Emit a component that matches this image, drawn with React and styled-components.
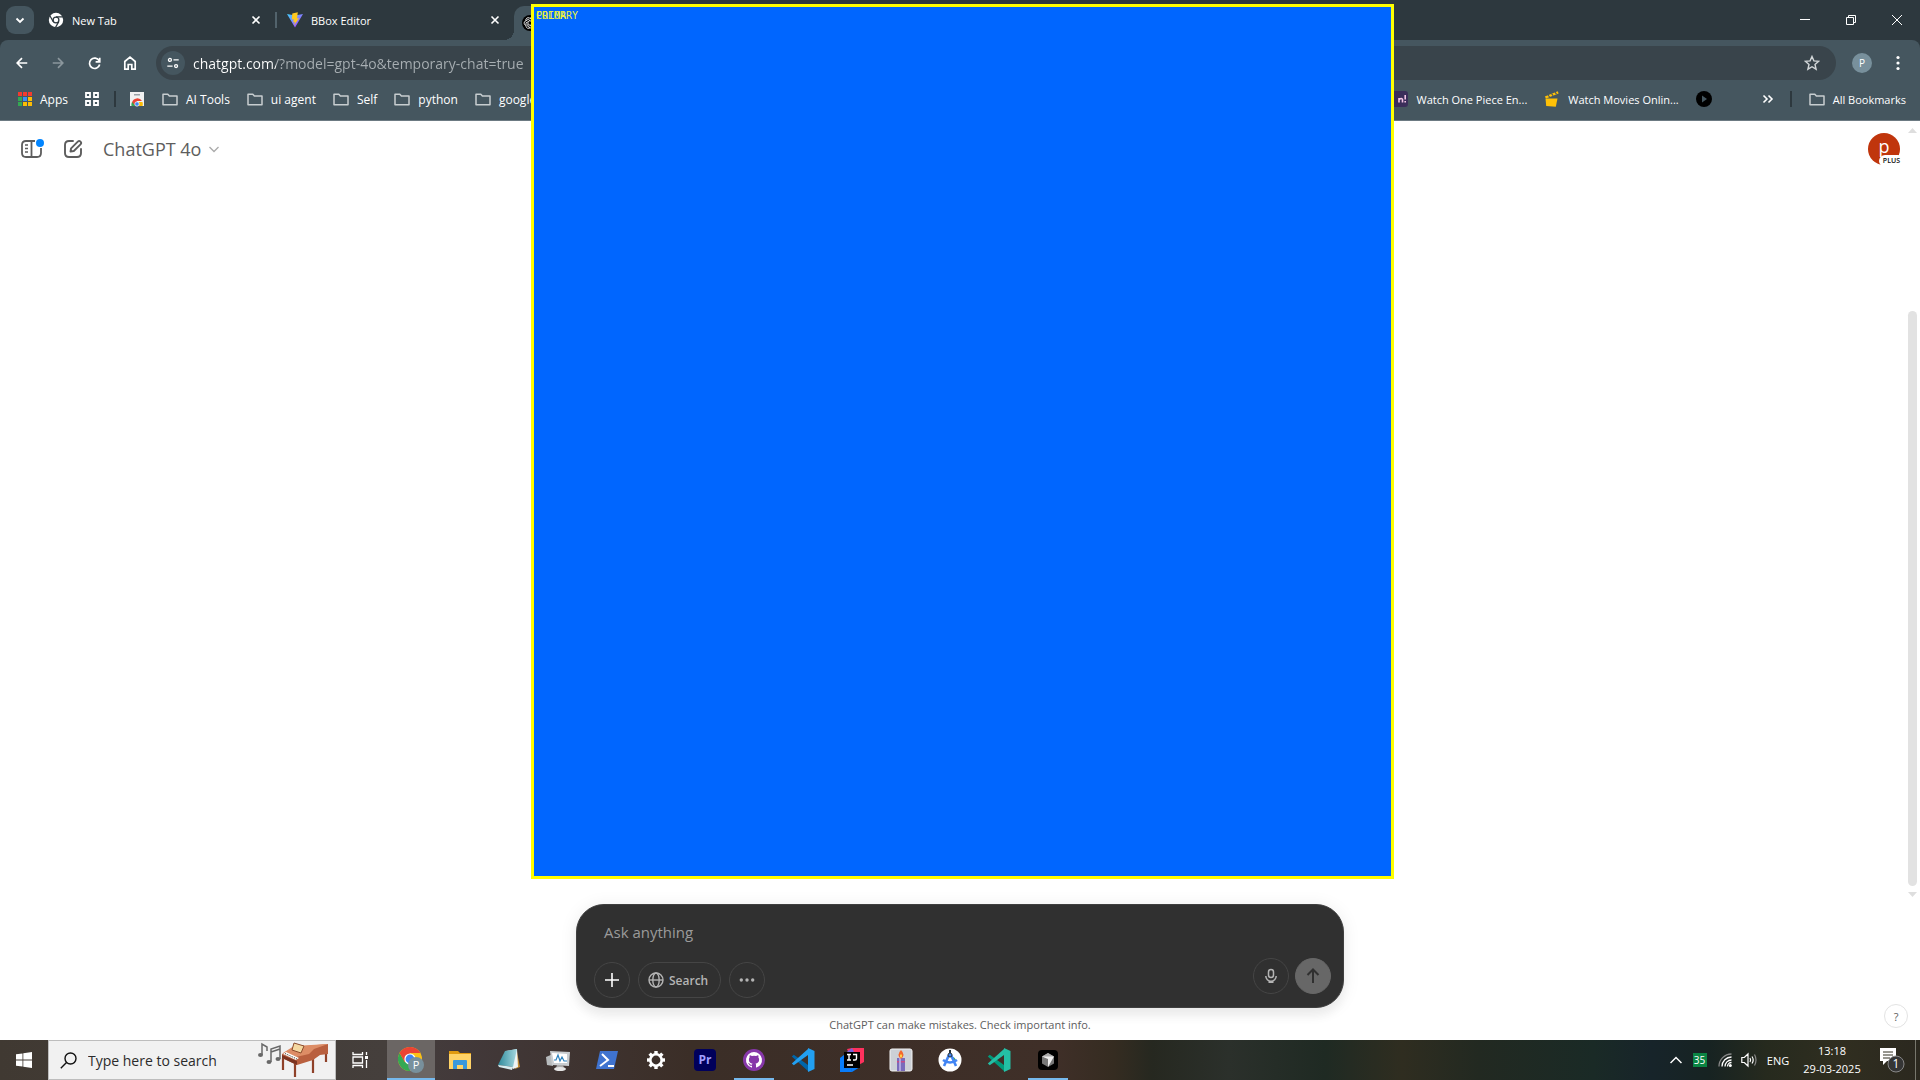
import React from "react";
import styled, { createGlobalStyle } from "styled-components";

const GlobalStyle = createGlobalStyle`
  * { box-sizing: border-box; }
  body { margin: 0; background: #fff; overflow: hidden; }
  body, button, input, textarea { font-family: "Open Sans", "Noto Sans", sans-serif; }
  button { padding: 0; border: 0; background: none; color: inherit; cursor: pointer; }
  a { color: inherit; text-decoration: none; }
  svg { display: block; flex: none; }
`;

const Desktop = styled.div`
  position: relative;
  display: flex;
  flex-direction: column;
  height: 100vh;
`;

/* ---------- browser chrome ---------- */
const TabStrip = styled.div`
  display: flex;
  align-items: center;
  height: 40px;
  background: #2d383e;
  color: #fff;
`;
const TabSearch = styled.button`
  display: grid;
  place-items: center;
  width: 28px;
  height: 28px;
  margin: 0 4px 0 6px;
  border-radius: 9px;
  background: #45565f;
`;
const Tab = styled.div`
  display: flex;
  align-items: center;
  gap: 8px;
  width: 237px;
  padding: 0 14px 0 10px;
  font-size: 11px;
`;
const TabTitle = styled.span`flex: 1;`;
const TabDivider = styled.span`
  width: 2px;
  height: 16px;
  background: #52636c;
`;
const ActiveTab = styled.div`
  position: relative;
  align-self: flex-end;
  display: flex;
  align-items: center;
  width: 238px;
  height: 34px;
  padding-left: 8px;
  border-radius: 10px 10px 0 0;
  background: #45565f;
  &::before {
    content: "";
    position: absolute;
    left: -10px;
    bottom: 0;
    width: 10px;
    height: 10px;
    background: radial-gradient(circle at 0 0, transparent 10px, #45565f 10px);
  }
`;
const WindowButtons = styled.div`
  display: flex;
  align-self: stretch;
  margin-left: auto;
`;
const WindowButton = styled.button`
  display: grid;
  place-items: center;
  width: 46px;
`;
const ToolbarBack = styled.div`background: #2d383e;`;
const Toolbar = styled.div`
  display: flex;
  align-items: center;
  height: 46px;
  padding: 0 4px;
  border-radius: 8px 8px 0 0;
  background: #45565f;
  color: #fff;
`;
const ToolButton = styled.button`
  display: grid;
  place-items: center;
  width: 36px;
  height: 34px;
  color: ${(p) => (p.$dim ? "#8b979d" : "#fff")};
`;
const Omnibox = styled.form`
  flex: 1;
  display: flex;
  align-items: center;
  height: 34px;
  margin: 0 8px;
  padding: 0 16px 0 5px;
  border-radius: 17px;
  background: #39444b;
`;
const SiteInfo = styled.button`
  display: grid;
  place-items: center;
  width: 24px;
  height: 24px;
  margin-right: 8px;
  border-radius: 50%;
  background: #45565f;
`;
const Address = styled.input`
  flex: 1;
  min-width: 0;
  padding: 0;
  border: 0;
  outline: 0;
  font-size: 14px;
  color: transparent;
  background: linear-gradient(90deg, #fff 83px, #a8afb3 83px);
  background-clip: text;
`;
const ProfileButton = styled.button`
  width: 20px;
  height: 20px;
  margin: 0 8px;
  border-radius: 50%;
  background: #78909c;
  color: #fff;
  font-size: 10px;
  line-height: 20px;
`;
const BookmarkBar = styled.nav`
  display: flex;
  align-items: center;
  height: 35px;
  padding: 0 14px 8px 18px;
  border-bottom: 1px solid #6c7a82;
  background: #45565f;
  color: #fff;
  white-space: nowrap;
`;
const BookmarkGroup = styled.div`
  display: flex;
  align-items: center;
  font-size: ${(p) => (p.$compact ? 11 : 12)}px;
`;
const Bookmark = styled.a`
  display: flex;
  align-items: center;
  gap: 8px;
  margin-right: ${(p) => p.$gap ?? 17}px;
`;
const BookmarkDivider = styled.span`
  width: 2px;
  height: 16px;
  margin-right: ${(p) => p.$gap}px;
  background: #2d383e;
`;
const Spacer = styled.span`flex: 1;`;

/* ---------- page ---------- */
const Page = styled.main`
  flex: 1;
  display: flex;
  flex-direction: column;
  min-height: 0;
  background: #fff;
`;
const ScrollArea = styled.div`
  flex: 1;
  display: flex;
  align-items: flex-start;
`;
const PageHeader = styled.header`
  flex: 1;
  display: flex;
  align-items: center;
  gap: 18px;
  height: 56px;
  padding: 0 5px 0 21px;
  color: #5d5d5d;
`;
const IconButton = styled.button`
  display: grid;
  place-items: center;
  height: 24px;
`;
const MoreBookmarks = styled(IconButton)`margin-right: 16px;`;
const ModelButton = styled.button`
  display: flex;
  align-items: center;
  gap: 8px;
  padding: 0 2px;
  font-size: 18px;
  font-weight: 500;
`;
const Account = styled.button`
  position: relative;
  width: 32px;
  height: 32px;
  margin-left: auto;
  border-radius: 50%;
  background: #c0350c;
  color: #fff;
  font-size: 18px;
  line-height: 24px;
`;
const AccountInitial = styled.span`
  display: block;
  height: 30px;
`;
const PlusBadge = styled.span`
  position: absolute;
  right: -4px;
  bottom: -2px;
  padding: 0 4px;
  border-radius: 6px;
  background: #fff;
  color: #0d0d0d;
  font-size: 7px;
  font-weight: 600;
  line-height: 12px;
`;
const ScrollRail = styled.div`
  align-self: stretch;
  display: flex;
  flex-direction: column;
  align-items: center;
  width: 15px;
  padding: 7px 0 3px;
`;
const ScrollTrack = styled.div`
  flex: 1;
  display: flex;
  flex-direction: column;
  justify-content: flex-end;
  padding: 6px 0;
`;
const ScrollThumb = styled.div`
  width: 9px;
  height: 77%;
  border-radius: 5px;
  background: #e2e2e2;
`;
const Footer = styled.footer`
  display: flex;
  justify-content: space-between;
  align-items: flex-end;
  padding: 4px 12px 0;
  &::before { content: ""; width: 24px; }
`;
const ComposerColumn = styled.div`
  width: 768px;
  text-align: center;
`;
const Composer = styled.form`
  display: flex;
  flex-direction: column;
  justify-content: space-between;
  height: 104px;
  padding: 15px 12px 9px 17px;
  border: 1px solid #3f3f3f;
  border-radius: 28px;
  background: #303030;
  box-shadow: 0 9px 9px rgba(0, 0, 0, 0.04), 0 2px 18px rgba(0, 0, 0, 0.08);
`;
const Prompt = styled.textarea`
  height: 24px;
  padding: 0 10px;
  border: 0;
  outline: 0;
  resize: none;
  background: transparent;
  color: #fff;
  font-size: 15px;
  line-height: 24px;
  overflow: hidden;
  &::placeholder { color: #9b9b9b; opacity: 1; }
`;
const Actions = styled.div`
  display: flex;
  gap: 8px;
`;
const RightActions = styled.div`
  display: flex;
  gap: 6px;
  margin: -4px 0 4px auto;
`;
const RoundButton = styled.button`
  display: flex;
  align-items: center;
  justify-content: center;
  gap: 5px;
  min-width: 36px;
  height: 36px;
  padding: ${(p) => (p.$wide ? "0 12px 0 9px" : "0")};
  border: 1px solid ${(p) => (p.$solid ? "#676767" : "#454545")};
  border-radius: 18px;
  background: ${(p) => (p.$solid ? "#676767" : "transparent")};
  color: ${(p) => p.$color ?? "#b4b4b4"};
  font-size: 12px;
  font-weight: 600;
`;
const Notice = styled.p`
  margin: 0;
  padding-top: 2px;
  color: #5d5d5d;
  font-size: 11px;
  line-height: 30px;
`;
const Help = styled.button`
  width: 24px;
  height: 24px;
  margin-bottom: 12px;
  border: 1px solid #e3e3e3;
  border-radius: 50%;
  color: #5d5d5d;
  font-size: 11px;
`;

/* ---------- bounding box laid over the screen ---------- */
const Region = styled.section`
  position: absolute;
  z-index: 2;
  left: 531px;
  top: 4px;
  width: 863px;
  height: 875px;
  border: 3px solid #ff0;
  background: #06f;
`;
const RegionLabel = styled.span`
  position: absolute;
  left: 2px;
  top: 3px;
  color: #e8f03c;
  font-family: "DejaVu Sans Mono", monospace;
  font-size: 10px;
  line-height: 12px;
`;

/* ---------- task bar ---------- */
const Taskbar = styled.div`
  display: flex;
  height: 40px;
  color: #fff;
  background: linear-gradient(90deg, #403932 0, #453f3c 20%, #42393a 24%, #3b2e27 36%, #3f2f28 55%,
    #352c21 58%, #262820 60%, #2b302b 64%, #1f2a23 69%, #2f2d20 73%, #222921 77%,
    #1a2a26 83%, #17242a 86%, #172322 89%, #262a1e 92%, #302e20 96%, #2b281f 100%);
`;
const StartButton = styled.button`
  display: grid;
  place-items: center;
  width: 48px;
`;
const TaskSearch = styled.form`
  display: flex;
  align-items: center;
  gap: 11px;
  width: 288px;
  padding: 0 6px 0 11px;
  border: 1px solid #bdbdbd;
  background: #f1f1f1;
  color: #111;
`;
const TaskInput = styled.input`
  flex: 1;
  min-width: 0;
  padding: 0;
  border: 0;
  outline: 0;
  background: transparent;
  font-size: 14px;
  &::placeholder { color: #2b2b2b; opacity: 1; }
`;
const TaskButton = styled.button`
  display: flex;
  flex-direction: column;
  align-items: center;
  justify-content: center;
  width: 48px;
  margin-right: 1px;
  background: ${(p) => (p.$active ? "#6b6664" : "transparent")};
  border-top: 2px solid transparent;
  border-bottom: 2px solid transparent;
  ${(p) => p.$active && "border-bottom-color: #76b9ed;"}
  ${(p) => p.$running && "border-bottom-color: #76b9ed; width: 40px; margin: 0 5px 0 4px;"}
`;
const RunningApps = styled.div`
  display: flex;
  margin-left: 2px;
`;
const Tray = styled.div`
  display: flex;
  align-items: center;
  margin-left: auto;
  font-size: 11px;
`;
const TrayButton = styled.button`
  display: grid;
  place-items: center;
  width: ${(p) => p.$width}px;
  height: 40px;
  font-size: 11px;
`;
const Temperature = styled.span`
  width: 14px;
  height: 14px;
  background: #0b8443;
  font-size: 10px;
  line-height: 14px;
`;
const Clock = styled.time`
  width: 72px;
  text-align: center;
  line-height: 18px;
`;
const ShowDesktop = styled.button`
  width: 5px;
  height: 40px;
  border-left: 1px solid #77766c;
`;

/* ---------- drawings ---------- */
const Line = ({ size = 16, box = 16, width = 1.5, children, ...rest }) => (
  <svg width={size} height={size} viewBox={`0 0 ${box} ${box}`} fill="none" stroke="currentColor" strokeWidth={width} aria-hidden="true" {...rest}>
    {children}
  </svg>
);
const CloseIcon = () => <Line size={10} box={10} width={1.6}><path d="M1.5 1.5l7 7M8.5 1.5l-7 7" /></Line>;
const FolderIcon = () => (
  <Line stroke="#c7cdd0"><path d="M1 3.2h4.8l1.6 1.9H15v8.7H1z" strokeLinejoin="round" /></Line>
);
const ChromeMono = () => (
  <svg width="16" height="16" viewBox="0 0 16 16" aria-hidden="true">
    <circle cx="8" cy="8" r="7.2" fill="#fff" />
    <circle cx="8" cy="8" r="2.9" fill="#fff" stroke="#2d383e" strokeWidth="1.3" />
    <path d="M8 4.8h7M5.2 9.6L1.9 3.8M10.8 9.6l-3.4 6" stroke="#2d383e" strokeWidth="1.2" />
  </svg>
);
const ViteIcon = () => (
  <svg width="16" height="16" viewBox="0 0 16 16" aria-hidden="true">
    <defs><linearGradient id="vite" x2="1" y2="1"><stop stopColor="#41d1ff" /><stop offset="1" stopColor="#bd34fe" /></linearGradient></defs>
    <path d="M0 2l8 13.500L16 2l-8 1.500z" fill="url(#vite)" />
    <path d="M10.800.3L5.300 1.400l-.5 6.200 2-.4-.6 3 1.700-.5-.9 3.600L12.200 6l-2.200.4z" fill="#ffc91f" />
  </svg>
);
const KnotIcon = () => (
  <svg width="16" height="16" viewBox="0 0 16 16" aria-hidden="true">
    <circle cx="8" cy="8" r="8" fill="#000" />
    {[0, 60, 120, 180, 240, 300].map((a) => (
      <path key={a} d="M8 3.200a2.400 2.400 0 014 1.600v3.400L8.400 10" transform={`rotate(${a} 8 8)`} fill="none" stroke="#fff" strokeWidth=".8" />
    ))}
  </svg>
);
const AppsIcon = () => (
  <svg width="14" height="14" viewBox="0 0 14 14" aria-hidden="true">
    {["#f33b2f", "#f33b2f", "#f33b2f", "#34a853", "#3b91f5", "#fbbc05", "#34a853", "#fbbc05", "#fbbc05"].map((c, i) => (
      <rect key={i} x={(i % 3) * 5} y={Math.floor(i / 3) * 5} width="4" height="4" fill={c} />
    ))}
  </svg>
);
const StoreIcon = () => (
  <svg width="16" height="16" viewBox="0 0 16 16" aria-hidden="true">
    <path d="M1 1h14v14H1z" fill="#f1f1f1" /><path d="M5 3h6v1.500H5z" fill="#9aa0a6" />
    <path d="M3 15V11.500a5.500 5.500 0 0110-1.500H8l-1 5z" fill="#ea4335" /><path d="M2.500 15a6 6 0 01.5-4l3.500 4z" fill="#34a853" />
    <path d="M9.500 11h4q.8 2 0 4H9z" fill="#fbbc05" /><circle cx="8" cy="13" r="2.200" fill="#4285f4" stroke="#fff" strokeWidth=".7" />
  </svg>
);
const AnimeIcon = () => (
  <svg width="16" height="16" viewBox="0 0 16 16" aria-hidden="true">
    <rect width="16" height="16" rx="3" fill="#3b2e5a" />
    <path d="M7 7v4.500M7 8.500q3-2 3.500 0v3M13.200 4v4.500M13.200 10v1.500" stroke="#f4c5e6" strokeWidth="1.600" fill="none" />
  </svg>
);
const ClapIcon = () => (
  <svg width="16" height="16" viewBox="0 0 16 16" aria-hidden="true">
    <path d="M1.500 7.500h12l-1.700 8.200-9.600-.6z" fill="#ffc107" /><path d="M.8 5.500L13.800.3l.8 2.200L2 7.400z" fill="#ffc107" />
    <path d="M4 4l1.600 2M7.500 2.600l1.600 2M11 1.200l1.500 2" stroke="#45565f" strokeWidth="1.100" />
  </svg>
);
const PlayIcon = () => (
  <svg width="16" height="16" viewBox="0 0 16 16" aria-hidden="true">
    <circle cx="8" cy="8" r="8" fill="#000" /><path d="M6 4.500L11 8l-5 3.500z" fill="#45565f" />
  </svg>
);
const Arrow = ({ down }) => (
  <svg width="9" height="5" viewBox="0 0 9 5" aria-hidden="true"><path d={down ? "M0 0h9L4.500 5z" : "M0 5h9L4.500 0z"} fill="#dedede" /></svg>
);
const PianoIcon = () => (
  <svg width="72" height="36" viewBox="0 0 72 36" aria-hidden="true">
    <path d="M5 13V2l5 3v4M14 20V7l9-3v13M14 10l9-3" fill="none" stroke="#686868" strokeWidth="1.500" />
    <ellipse cx="3.500" cy="13" rx="2.500" ry="2" fill="#686868" /><ellipse cx="12" cy="20" rx="2.500" ry="2" fill="#686868" /><ellipse cx="21" cy="17" rx="2.500" ry="2" fill="#686868" />
    <path d="M26 16v12M38 21v14M56 15v16M69 6v14" stroke="#8f4129" strokeWidth="2.200" />
    <path d="M25 12L37 5l34-3v10l-8 1-7 5-16 5-15-7z" fill="#b9603f" />
    <path d="M37 4l34-2-14 5-5 5-13 3-13-4z" fill="#dd8d66" />
    <path d="M25 13l15 6v4l-15-7z" fill="#7c3421" />
    <path d="M26 12l13 6 3-2-13-6z" fill="#fff" /><path d="M28 11.500l12 5.500" stroke="#332" strokeDasharray="1 1" />
    <path d="M37 1l10 3-3 7-9-3z" fill="#f4d8a1" stroke="#8b4b2c" />
  </svg>
);
const ChromeIcon = () => (
  <svg width="26" height="26" viewBox="0 0 26 26" aria-hidden="true">
    <circle cx="12" cy="12" r="12" fill="#fbc116" />
    <path d="M1.600 6A12 12 0 0012 24l5.200-9L12 12 6.800 15z" fill="#34a853" />
    <path d="M1.600 6A12 12 0 0122.400 6H12L6.800 15z" fill="#ea4335" />
    <circle cx="12" cy="12" r="5.600" fill="#fff" /><circle cx="12" cy="12" r="4.400" fill="#4285f4" />
    <circle cx="18" cy="18" r="8" fill="#78909c" />
    <text x="18" y="22" textAnchor="middle" fontSize="11" fill="#fff">P</text>
  </svg>
);
const ExplorerIcon = () => (
  <svg width="24" height="24" viewBox="0 0 24 24" aria-hidden="true">
    <path d="M1 3h9l2 2h11v3H1z" fill="#e19b10" /><path d="M1 6h22v15H1z" fill="#ffd367" />
    <path d="M5 21v-8q0-1 1-1h12q1 0 1 1v8h-4v-4H9v4z" fill="#3b99dc" />
  </svg>
);
const NotepadIcon = () => (
  <svg width="24" height="24" viewBox="0 0 24 24" aria-hidden="true">
    <defs><linearGradient id="pad" x2="1"><stop stopColor="#2f8a9b" /><stop offset="1" stopColor="#a5d8e0" /></linearGradient></defs>
    <path d="M20 4l3 15-5 2z" fill="#c28b33" /><path d="M9 3l11-2 1 18-5 2z" fill="#eef4f5" /><path d="M8 3l12-2-4 18-15-2z" fill="url(#pad)" /><path d="M1 17l15 2-1 3-13-3z" fill="#d8ecef" />
  </svg>
);
const MonitorIcon = () => (
  <svg width="24" height="24" viewBox="0 0 24 24" aria-hidden="true">
    <path d="M0 9l7-3v12l-6-1z" fill="#b7bbbd" /><path d="M4 3l20 1-1 14-17-1z" fill="#c9cdd0" /><path d="M6 5l15 1v9L8 15z" fill="#fff" />
    <path d="M8 12h2l2-5 2 6 2-4 2 4h3" fill="none" stroke="#2a80bd" strokeWidth="1.200" /><path d="M11 17h6l1 3H10z" fill="#aaa" /><ellipse cx="14" cy="21" rx="6" ry="2" fill="#e5e5e5" />
  </svg>
);
const PowerShellIcon = () => (
  <svg width="24" height="24" viewBox="0 0 24 24" aria-hidden="true">
    <path d="M5 3h18l-4 18H1z" fill="#3f73cf" /><path d="M7 6l6 6-8 6M13 18h6" fill="none" stroke="#fff" strokeWidth="2" />
  </svg>
);
const GearIcon = () => (
  <svg width="20" height="20" viewBox="0 0 20 20" aria-hidden="true">
    <circle cx="10" cy="10" r="5.700" fill="none" stroke="#fff" strokeWidth="2.600" />
    {[0, 45, 90, 135, 180, 225, 270, 315].map((a) => <rect key={a} x="8.300" y="1" width="3.400" height="3" fill="#fff" transform={`rotate(${a} 10 10)`} />)}
  </svg>
);
const PremiereIcon = () => (
  <svg width="22" height="22" viewBox="0 0 22 22" aria-hidden="true">
    <rect width="22" height="22" rx="4" fill="#00005b" /><text x="11" y="15" textAnchor="middle" fontSize="12" fontWeight="700" fill="#9f9fff">Pr</text>
  </svg>
);
const GithubIcon = () => (
  <svg width="22" height="22" viewBox="0 0 22 22" aria-hidden="true">
    <circle cx="11" cy="11" r="11" fill="#8637a9" />
    <path d="M11 3a8 8 0 00-2.500 15.600c.4.100.5-.2.500-.4v-1.500c-2.200.5-2.700-1-2.700-1-.4-.9-.9-1.200-.9-1.200-.7-.5.100-.5.100-.5.800.1 1.200.8 1.200.8.700 1.300 1.900.9 2.300.7.100-.5.300-.9.500-1.100-1.800-.2-3.600-.9-3.600-4 0-.9.300-1.600.8-2.100-.1-.2-.4-1 .1-2.100 0 0 .7-.2 2.200.8a7.600 7.600 0 014 0c1.500-1 2.200-.8 2.200-.8.500 1.100.2 1.900.1 2.100.5.500.8 1.200.8 2.100 0 3.100-1.900 3.800-3.600 4 .3.300.5.700.5 1.500v2.300c0 .2.100.5.5.4A8 8 0 0011 3z" fill="#fff" />
  </svg>
);
const CodeIcon = ({ dark, light }) => (
  <svg width="24" height="24" viewBox="0 0 24 24" aria-hidden="true">
    <path d="M17 1v22L.8 8.500l2-1.800L17 17z" fill={dark} /><path d="M17 1v6L2.800 17.300l-2-1.800z" fill={light} />
    <path d="M17 0l6.500 3v18L17 24z" fill={light} />
  </svg>
);
const IdeaIcon = () => (
  <svg width="24" height="24" viewBox="0 0 24 24" aria-hidden="true">
    <path d="M0 10l9-7 3 21H0z" fill="#087cfa" /><path d="M7 1l5-1h12v14l-9 5z" fill="#fe315d" /><path d="M4 6l8-6 5 10z" fill="#7b61d9" /><path d="M12 24l8-5v-7l-10 5z" fill="#087cfa" />
    <rect x="4" y="4" width="16" height="16" fill="#000" /><path d="M7 6.500h4M9 6.500V12M7 12h4M13 6.500h3.500v4q0 1.500-1.500 1.500h-2M7 17h6" fill="none" stroke="#fff" strokeWidth="1.400" />
  </svg>
);
const CandleIcon = () => (
  <svg width="24" height="24" viewBox="0 0 24 24" aria-hidden="true">
    <rect x="1" y="1" width="22" height="22" rx="2" fill="#ccd0d6" stroke="#f4f4f4" /><path d="M8 10h8v13H8z" fill="#796bbb" /><path d="M8 13h8v1.500H8z" fill="#c84a84" />
    <path d="M10 10h2v13h-2z" fill="#b0a5df" /><path d="M12 2q5 5 0 9-5-4 0-9z" fill="#f4672a" /><path d="M12 6q2 2 0 4-2-2 0-4z" fill="#ffe24d" />
  </svg>
);
const AndroidIcon = () => (
  <svg width="24" height="24" viewBox="0 0 24 24" aria-hidden="true">
    <circle cx="12" cy="12" r="11.500" fill="#fff" /><path d="M15 9a5 5 0 013 5l-3-1z" fill="#34a853" />
    <path d="M11 7L6 18M13 7l5 11M5 12q7 5 14 0" fill="none" stroke="#4285f4" strokeWidth="2.600" /><circle cx="12" cy="7" r="2" fill="#4285f4" stroke="#263238" /><path d="M12 2v3" stroke="#263238" strokeWidth="2" />
  </svg>
);
const CursorIcon = () => (
  <svg width="20" height="20" viewBox="0 0 20 20" aria-hidden="true">
    <rect width="20" height="20" rx="4" fill="#000" /><path d="M10 3l6 3.500v7L10 17l-6-3.500v-7z" fill="#777" /><path d="M4 6.500L10 3l6 3.500-6 2z" fill="#aaa" /><path d="M4 6.500h12L10 17V9z" fill="#eee" />
  </svg>
);

const folders = ["AI Tools", "ui agent", "Self", "python", "google"];

const apps = [
  { name: "Google Chrome", icon: <ChromeIcon />, active: true },
  { name: "File Explorer", icon: <ExplorerIcon /> },
  { name: "Notepad", icon: <NotepadIcon /> },
  { name: "Resource Monitor", icon: <MonitorIcon /> },
  { name: "PowerShell", icon: <PowerShellIcon /> },
  { name: "Settings", icon: <GearIcon /> },
  { name: "Premiere Pro", icon: <PremiereIcon /> },
  { name: "GitHub Desktop", icon: <GithubIcon />, running: true },
  { name: "Visual Studio Code", icon: <CodeIcon dark="#0065a9" light="#22a0f2" /> },
  { name: "IntelliJ IDEA", icon: <IdeaIcon /> },
  { name: "Candle", icon: <CandleIcon /> },
  { name: "Android Studio", icon: <AndroidIcon /> },
  { name: "VS Code Insiders", icon: <CodeIcon dark="#009a7c" light="#24bfa5" /> },
  { name: "Cursor", icon: <CursorIcon />, running: true },
];

function BrowserChrome() {
  return (
    <>
      <TabStrip>
        <TabSearch aria-label="Search tabs"><Line size={10} box={10} width={1.8}><path d="M1.500 3.500L5 7l3.500-3.500" /></Line></TabSearch>
        <Tab><ChromeMono /><TabTitle>New Tab</TabTitle><IconButton aria-label="Close New Tab"><CloseIcon /></IconButton></Tab>
        <TabDivider />
        <Tab><ViteIcon /><TabTitle>BBox Editor</TabTitle><IconButton aria-label="Close BBox Editor"><CloseIcon /></IconButton></Tab>
        <ActiveTab><KnotIcon /></ActiveTab>
        <WindowButtons>
          <WindowButton aria-label="Minimize"><Line size={10} box={10} width={1}><path d="M0 4.500h10" /></Line></WindowButton>
          <WindowButton aria-label="Restore"><Line size={10} box={10} width={1}><path d="M.5 2.500h7v7h-7zM2.500 2.500v-2h7v7h-2" /></Line></WindowButton>
          <WindowButton aria-label="Close"><Line size={10} box={10} width={1}><path d="M0 0l10 10M10 0L0 10" /></Line></WindowButton>
        </WindowButtons>
      </TabStrip>
      <ToolbarBack>
        <Toolbar>
          <ToolButton aria-label="Back"><Line size={14} width={1.9}><path d="M14 8H3M8 2.500L2.500 8 8 13.500" /></Line></ToolButton>
          <ToolButton $dim aria-label="Forward"><Line size={14} width={1.9}><path d="M2 8h11M8 2.500L13.500 8 8 13.500" /></Line></ToolButton>
          <ToolButton aria-label="Reload"><Line size={15} width={1.8}><path d="M13 5.200A5.500 5.500 0 1013.500 9M13.600 1.800v4.400H9.200" /></Line></ToolButton>
          <ToolButton aria-label="Home"><Line width={1.7}><path d="M2.800 14.200V6.500L8 2.200l5.200 4.300v7.700H9.800V9.500H6.200v4.700z" /></Line></ToolButton>
          <Omnibox>
            <SiteInfo type="button" aria-label="Site information">
              <Line size={14}><circle cx="4.500" cy="4.500" r="1.700" /><path d="M8.500 4.500h6M1.500 11.500h6" /><circle cx="11.500" cy="11.500" r="1.700" /></Line>
            </SiteInfo>
            <Address aria-label="Address" defaultValue="chatgpt.com/?model=gpt-4o&temporary-chat=true" />
            <IconButton type="button" aria-label="Bookmark this tab"><Line width={1.4} stroke="#d3d7d9"><path d="M8 1.500l1.900 4.400 4.800.4L11 9.500l1.100 4.700L8 11.700l-4.100 2.500L5 9.500 1.300 6.300l4.800-.4z" /></Line></IconButton>
          </Omnibox>
          <ProfileButton aria-label="Profile">P</ProfileButton>
          <ToolButton aria-label="Menu"><Line fill="currentColor" stroke="none"><circle cx="8" cy="2.500" r="1.600" /><circle cx="8" cy="8" r="1.600" /><circle cx="8" cy="13.500" r="1.600" /></Line></ToolButton>
        </Toolbar>
      </ToolbarBack>
      <BookmarkBar aria-label="Bookmarks">
        <BookmarkGroup>
          <Bookmark href="#apps"><AppsIcon />Apps</Bookmark>
          <Bookmark href="#tab-groups" aria-label="Tab groups" $gap={15}><Line size={14} box={14} width={1.8}><path d="M1 1h4v4H1zM9 1h4v4H9zM1 9h4v4H1zM9 9h4v4H9z" /></Line></Bookmark>
          <BookmarkDivider $gap={13} />
          <Bookmark href="#store" aria-label="Web store"><StoreIcon /></Bookmark>
          {folders.map((name) => <Bookmark key={name} href={`#${name}`}><FolderIcon />{name}</Bookmark>)}
        </BookmarkGroup>
        <Spacer />
        <BookmarkGroup $compact>
          <Bookmark href="#one-piece"><AnimeIcon />Watch One Piece En...</Bookmark>
          <Bookmark href="#movies"><ClapIcon />Watch Movies Onlin...</Bookmark>
          <Bookmark href="#play" aria-label="Player" $gap={50}><PlayIcon /></Bookmark>
          <MoreBookmarks aria-label="More bookmarks"><Line size={12} box={12} width={1.6}><path d="M1.500 2.500L5 6 1.500 9.500M6.500 2.500L10 6 6.500 9.500" /></Line></MoreBookmarks>
          <BookmarkDivider $gap={17} />
          <Bookmark href="#all" $gap={0}><FolderIcon />All Bookmarks</Bookmark>
        </BookmarkGroup>
      </BookmarkBar>
    </>
  );
}

function ChatPage() {
  return (
    <Page>
      <ScrollArea>
        <PageHeader>
          <IconButton aria-label="Open sidebar">
            <svg width="24" height="20" viewBox="0 0 24 20" fill="none" stroke="#5d5d5d" strokeWidth="1.8" aria-hidden="true">
              <path d="M14 2H5Q1 2 1 6v8q0 4 4 4h11q4 0 4-4V9M10.500 2v16" /><path d="M4 6h3M4 9.500h3M4 13h3" strokeWidth="1.4" /><circle cx="19" cy="4" r="4" fill="#0285ff" stroke="none" />
            </svg>
          </IconButton>
          <IconButton aria-label="New chat">
            <Line size={20} box={20} width={1.9}><path d="M10 2H6Q2 2 2 6v8q0 4 4 4h8q4 0 4-4v-4M7.500 12.500l.6-3.200 6.700-6.700a1.900 1.900 0 012.700 2.700l-6.700 6.700z" strokeLinejoin="round" strokeLinecap="round" /></Line>
          </IconButton>
          <ModelButton>ChatGPT 4o<Line size={10} box={10} width={1.3} stroke="#aaa"><path d="M.5 3L5 7.500 9.500 3" /></Line></ModelButton>
          <Account aria-label="Account"><AccountInitial>p</AccountInitial><PlusBadge>PLUS</PlusBadge></Account>
        </PageHeader>
        <ScrollRail><Arrow /><ScrollTrack><ScrollThumb /></ScrollTrack><Arrow down /></ScrollRail>
      </ScrollArea>
      <Footer>
        <ComposerColumn>
          <Composer>
            <Prompt aria-label="Message" placeholder="Ask anything" rows={1} />
            <Actions>
              <RoundButton type="button" aria-label="Add" $color="#fff"><Line width={1.6}><path d="M8 1v14M1 8h14" /></Line></RoundButton>
              <RoundButton type="button" $wide><Line width={1.4}><circle cx="8" cy="8" r="7" /><ellipse cx="8" cy="8" rx="3.200" ry="7" /><path d="M1 8h14" /></Line>Search</RoundButton>
              <RoundButton type="button" aria-label="More"><Line fill="currentColor" stroke="none"><circle cx="2.300" cy="8" r="1.700" /><circle cx="8" cy="8" r="1.700" /><circle cx="13.700" cy="8" r="1.700" /></Line></RoundButton>
              <RightActions>
                <RoundButton type="button" aria-label="Dictate"><Line width={1.5}><rect x="5.500" y="1.500" width="5" height="8" rx="2.500" /><path d="M2.800 8a5.200 5.200 0 0010.400 0M8 12.500v2M5.500 14.300h5" /></Line></RoundButton>
                <RoundButton type="submit" aria-label="Send" $solid $color="#303030"><Line width={2}><path d="M8 15V2M2.500 7L8 1.500 13.500 7" /></Line></RoundButton>
              </RightActions>
            </Actions>
          </Composer>
          <Notice>ChatGPT can make mistakes. Check important info.</Notice>
        </ComposerColumn>
        <Help aria-label="Help">?</Help>
      </Footer>
    </Page>
  );
}

function WindowsTaskbar() {
  return (
    <Taskbar>
      <StartButton aria-label="Start">
        <svg width="16" height="16" viewBox="0 0 16 16" fill="#fff" aria-hidden="true"><path d="M0 2.300L6.500 1.400v6.200H0zM7.300 1.300L16 0v7.600H7.300zM0 8.400h6.500v6.200L0 13.700zM7.300 8.400H16V16l-8.700-1.300z" /></svg>
      </StartButton>
      <TaskSearch>
        <Line size={17} box={17} width={1.4}><circle cx="10.500" cy="6.500" r="5.500" /><path d="M6.500 10.500L.8 16.200" /></Line>
        <TaskInput aria-label="Type here to search" placeholder="Type here to search" />
        <PianoIcon />
      </TaskSearch>
      <TaskButton aria-label="Task view">
        <Line width={1.3}><path d="M1 0v2.500h9.500V0M1 5h9.500v6H1zM1 16v-2.500h9.500V16M14.500 0v3M14.500 8v8" /><path d="M13 4h3v3h-3z" fill="currentColor" stroke="none" /></Line>
      </TaskButton>
      <RunningApps>
        {apps.map((a) => <TaskButton key={a.name} aria-label={a.name} $active={a.active} $running={a.running}>{a.icon}</TaskButton>)}
      </RunningApps>
      <Tray>
        <TrayButton $width={22} aria-label="Show hidden icons"><Line size={12} box={12} width={1.5}><path d="M.5 9L6 3.500 11.500 9" /></Line></TrayButton>
        <TrayButton $width={25} aria-label="Temperature"><Temperature>35</Temperature></TrayButton>
        <TrayButton $width={26} aria-label="Network">
          <Line size={14} box={14} width={1.3}><path d="M1 13.500A12.500 12.500 0 0113.500 1" stroke="#888" /><path d="M4 13.500A9.500 9.500 0 0113.500 4M7 13.500A6.500 6.500 0 0113.500 7M9.500 13.500a4 4 0 014-4" /><circle cx="12.300" cy="12.500" r="1.500" fill="#fff" stroke="none" /></Line>
        </TrayButton>
        <TrayButton $width={22} aria-label="Volume">
          <Line width={1.2}><path d="M.8 5.500h2.500L7 2v12L3.300 10.500H.8zM9 6q1.200 2 0 4M11 4.500q2.400 3.500 0 7" /><path d="M13.500 2.500q3 5.500 0 11" stroke="#888" /></Line>
        </TrayButton>
        <TrayButton $width={36}>ENG</TrayButton>
        <Clock>13:18<br />29-03-2025</Clock>
        <TrayButton $width={47} aria-label="1 notification">
          <svg width="26" height="26" viewBox="0 0 26 26" aria-hidden="true">
            <path d="M1 1h16v13H8l-4 4v-4H1z" fill="#fff" /><path d="M4 5h10M4 8h10M4 11h7" stroke="#302e20" strokeWidth="1" />
            <circle cx="17" cy="17" r="8" fill="#353535" stroke="#888" /><text x="17" y="21" textAnchor="middle" fontSize="12" fill="#fff">1</text>
          </svg>
        </TrayButton>
        <ShowDesktop aria-label="Show desktop" />
      </Tray>
    </Taskbar>
  );
}

export default function App() {
  return (
    <>
      <GlobalStyle />
      <Desktop>
        <BrowserChrome />
        <ChatPage />
        <WindowsTaskbar />
        <Region>
          <RegionLabel>PRIMARY</RegionLabel>
          <RegionLabel>COLOR</RegionLabel>
        </Region>
      </Desktop>
    </>
  );
}
